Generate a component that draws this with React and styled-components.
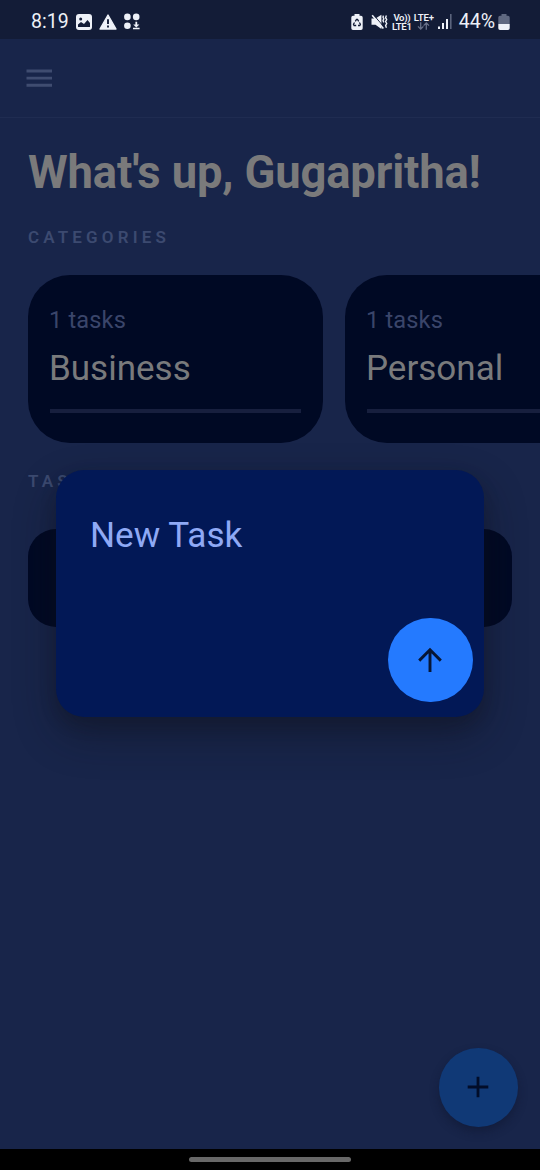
import React from "react";
import styled, { createGlobalStyle } from "styled-components";

const Global = createGlobalStyle`
  *, *::before, *::after { box-sizing: border-box; }
  body { margin: 0; background: #18254a; font-family: Roboto, sans-serif; overflow: hidden; }
  h1, h2, h3, p { margin: 0; font-weight: 400; white-space: nowrap; }
  button { border: 0; padding: 0; }
  svg { display: block; flex: none; }
`;

const Screen = styled.div`
  position: relative;
  width: 540px;
  height: 1170px;
  display: flex;
  flex-direction: column;
  overflow: hidden;
  background: #18254a;
`;

const StatusBar = styled.header`
  height: 39px;
  flex: none;
  display: flex;
  align-items: center;
  justify-content: space-between;
  padding: 4px 30px 0 31px;
  background: #131c37;
  color: #eef1f8;
`;

const StatusGroup = styled.div`
  display: flex;
  align-items: center;
  gap: ${(p) => p.$gap}px;
`;

const StatusItem = styled.div`
  flex: none;
  margin-right: ${(p) => p.$after}px;
`;

const StatusText = styled.span`
  font-size: ${(p) => p.$size}px;
  line-height: 22px;
`;

const Network = styled.div`
  display: flex;
  flex-direction: column;
  align-items: center;
  width: 20px;
  font-size: 9.6px;
  font-weight: 600;
  line-height: 9px;
  letter-spacing: ${(p) => p.$track || 0}px;
  white-space: nowrap;
`;

const AppBar = styled.nav`
  height: 79px;
  flex: none;
  display: flex;
  align-items: center;
  padding: 0 26px;
  border-bottom: 1px solid #1f2c51;
`;

const Content = styled.main`
  flex: 1;
  padding: 28px 28px 0;
`;

const Greeting = styled.h1`
  font-size: 45.4px;
  font-weight: 700;
  line-height: 54px;
  letter-spacing: -0.16px;
  color: #7a7a7b;
`;

const SectionLabel = styled.h2`
  margin-top: ${(p) => p.$top}px;
  font-size: 17px;
  font-weight: 600;
  line-height: 20px;
  letter-spacing: 4.15px;
  color: #3c4a70;
`;

const Categories = styled.section`
  display: flex;
  gap: 22px;
  margin-top: 28px;
`;

const CategoryCard = styled.article`
  width: 295px;
  height: 168px;
  flex: none;
  padding: 31px 22px 0;
  border-radius: 42px;
  background: #000924;
`;

const TaskCount = styled.p`
  margin-left: -1px;
  font-size: 23.6px;
  line-height: 28px;
  letter-spacing: 0.15px;
  color: #3a456a;
`;

const CategoryName = styled.h3`
  margin: 14px 0 0 -1px;
  font-size: 35px;
  line-height: 42px;
  color: #797a7c;
`;

const Progress = styled.div`
  height: 4px;
  margin-top: 19px;
  background: #171f3e;
`;

const TaskRow = styled.div`
  height: 98px;
  margin-top: 38px;
  border-radius: 28px;
  background: #000924;
`;

const Dialog = styled.section`
  position: absolute;
  left: 56px;
  top: 470px;
  width: 428px;
  height: 247px;
  display: flex;
  flex-direction: column;
  justify-content: space-between;
  padding: 44px 11.5px 15px 34px;
  border-radius: 28px;
  background: #021856;
  box-shadow: 0 18px 40px rgba(16, 18, 28, 0.45), 0 8px 16px rgba(16, 18, 28, 0.22);
`;

const TaskField = styled.p`
  font-size: 35.2px;
  line-height: 42px;
  color: #8fa9f5;
`;

const RoundButton = styled.button`
  width: ${(p) => p.$size}px;
  height: ${(p) => p.$size}px;
  display: flex;
  align-items: center;
  justify-content: center;
  border-radius: 50%;
`;

const SendButton = styled(RoundButton)`
  align-self: flex-end;
  background: #247aff;
`;

const AddButton = styled(RoundButton)`
  position: absolute;
  right: 22.5px;
  bottom: 43.5px;
  background: #103976;
  box-shadow: 0 5px 10px rgba(14, 20, 45, 0.45);
`;

const NavBar = styled.footer`
  height: 21px;
  flex: none;
  display: flex;
  justify-content: center;
  padding-top: 8px;
  background: #000;
`;

const Handle = styled.div`
  width: 162px;
  height: 5px;
  border-radius: 3px;
  background: #686868;
`;

const PictureIcon = () => (
  <svg width="16" height="16" viewBox="0 0 16 16">
    <rect width="16" height="16" rx="3" fill="#eef1f8" />
    <circle cx="4.7" cy="5" r="1.5" fill="#131c37" />
    <path d="M2 13v-2.5L5 8l3 2 3.5-4L14 9v4z" fill="#131c37" />
  </svg>
);

const WarningIcon = () => (
  <svg width="18" height="16" viewBox="0 0 18 16">
    <path d="M9 1 17 15H1z" fill="#eef1f8" stroke="#eef1f8" strokeWidth="1.4" strokeLinejoin="round" />
    <path d="M9 5.3v4.6M9 11.5v2" stroke="#131c37" strokeWidth="1.9" />
  </svg>
);

const DotsIcon = () => (
  <svg width="16" height="17" viewBox="0 0 16 17" fill="#eef1f8">
    <circle cx="3.4" cy="3.9" r="3.3" />
    <circle cx="12.2" cy="3.9" r="3.3" />
    <circle cx="3.4" cy="12.7" r="3.3" />
    <path d="M11.4 8.8h1.8v2.6h2.2l-3.1 3-3.1-3h2.2zM9 14.7h6.6v1.6H9z" />
  </svg>
);

const RecycleBatteryIcon = () => (
  <svg width="12" height="16" viewBox="0 0 12 16">
    <path d="M3.5 1.8V0h5v1.8H10a1.7 1.7 0 0 1 1.7 1.7v10.8A1.7 1.7 0 0 1 10 16H2a1.7 1.7 0 0 1-1.7-1.7V3.5A1.7 1.7 0 0 1 2 1.8z" fill="#eef1f8" />
    <path d="m4.3 7.4 1.2-2h1l1.2 2M8.4 8.5l1 1.8-.6 1.2H7M5.2 11.5H3.1l-.6-1.2 1-1.8" fill="none" stroke="#131c37" strokeWidth="1.3" />
  </svg>
);

const MuteIcon = () => (
  <svg width="17" height="16" viewBox="0 0 17 16">
    <path d="M.5 4.6h4L10.4.8v14.2L4.5 10.8h-4z" fill="#eef1f8" />
    <path d="m2.6.9 10.6 12.4" stroke="#131c37" strokeWidth="1" />
    <path d="m1.2 1.3 11.2 13.2" stroke="#eef1f8" strokeWidth="1.6" />
    <path d="m12.4 1.6-.4 1.6.8 1.6-.8 1.8.8 1.8M15.4 1.6l-.8 2 1.1 2-1.1 2 1.1 2-1.1 2 .8 2.2" fill="none" stroke="#eef1f8" strokeWidth="1.4" />
  </svg>
);

const DataArrowsIcon = () => (
  <svg width="13" height="8" viewBox="0 0 13 8" fill="none" stroke="#68718a" strokeWidth="1.3">
    <path d="M3.7.3v6.5M1 4.4l2.7 2.7 2.7-2.7M9.3 7.7V1.2M6.6 3.6 9.3.9 12 3.6" />
  </svg>
);

const SignalIcon = () => (
  <svg width="14" height="15" viewBox="0 0 14 15" fill="#eef1f8">
    <path d="M0 12.5h2V15H0zM4 9h2v6H4zM8 5h2v10H8z" />
    <path d="M12 0h1.6v15H12z" fill="#5b647d" />
  </svg>
);

const BatteryIcon = () => (
  <svg width="12" height="16" viewBox="0 0 12 16">
    <path d="M3.5 1.8V0h5v1.8H10a1.7 1.7 0 0 1 1.7 1.7V10H.3V3.5A1.7 1.7 0 0 1 2 1.8z" fill="#5f6880" />
    <path d="M.3 10h11.4v4.3A1.7 1.7 0 0 1 10 16H2a1.7 1.7 0 0 1-1.7-1.7z" fill="#eef1f8" />
  </svg>
);

const MenuIcon = () => (
  <svg width="26" height="18" viewBox="0 0 26 18" fill="#3f4c70">
    <path d="M.5 .5h25.5v2.9H.5zM.5 7.7h25.5v2.9H.5zM.5 14.8h25.5v2.9H.5z" />
  </svg>
);

const ArrowUpIcon = () => (
  <svg width="28" height="28" viewBox="0 0 28 28" fill="none" stroke="#071635" strokeWidth="2.9">
    <path d="M14 26V4M3.2 14.6 14 3.8l10.8 10.8" />
  </svg>
);

const PlusIcon = () => (
  <svg width="22" height="22" viewBox="0 0 22 22" stroke="#020d29" strokeWidth="2.8">
    <path d="M11 .7v20.6M.7 11h20.6" />
  </svg>
);

const categories = ["Business", "Personal"];

export default function App() {
  return (
    <>
      <Global />
      <Screen>
        <StatusBar>
          <StatusGroup $gap={7}>
            <StatusText $size={19.5}>8:19</StatusText>
            <PictureIcon />
            <WarningIcon />
            <DotsIcon />
          </StatusGroup>
          <StatusGroup $gap={0}>
            <StatusItem $after={8}>
              <RecycleBatteryIcon />
            </StatusItem>
            <StatusItem $after={4}>
              <MuteIcon />
            </StatusItem>
            <StatusItem $after={2}>
              <Network $track={-0.35}>
                <span>Vo))</span>
                <span>LTE1</span>
              </Network>
            </StatusItem>
            <StatusItem $after={4}>
              <Network $track={-0.1}>
                <span>LTE+</span>
                <DataArrowsIcon />
              </Network>
            </StatusItem>
            <StatusItem $after={7}>
              <SignalIcon />
            </StatusItem>
            <StatusItem $after={3}>
              <StatusText $size={19.5}>44%</StatusText>
            </StatusItem>
            <BatteryIcon />
          </StatusGroup>
        </StatusBar>
        <AppBar>
          <MenuIcon />
        </AppBar>
        <Content>
          <Greeting>What's up, Gugapritha!</Greeting>
          <SectionLabel $top={27}>CATEGORIES</SectionLabel>
          <Categories>
            {categories.map((name) => (
              <CategoryCard key={name}>
                <TaskCount>1 tasks</TaskCount>
                <CategoryName>{name}</CategoryName>
                <Progress />
              </CategoryCard>
            ))}
          </Categories>
          <SectionLabel $top={28}>TASKS</SectionLabel>
          <TaskRow />
        </Content>
        <NavBar>
          <Handle />
        </NavBar>
        <AddButton $size={78.5} aria-label="Add task">
          <PlusIcon />
        </AddButton>
        <Dialog>
          <TaskField>New Task</TaskField>
          <SendButton $size={84.5} aria-label="Save task">
            <ArrowUpIcon />
          </SendButton>
        </Dialog>
      </Screen>
    </>
  );
}
